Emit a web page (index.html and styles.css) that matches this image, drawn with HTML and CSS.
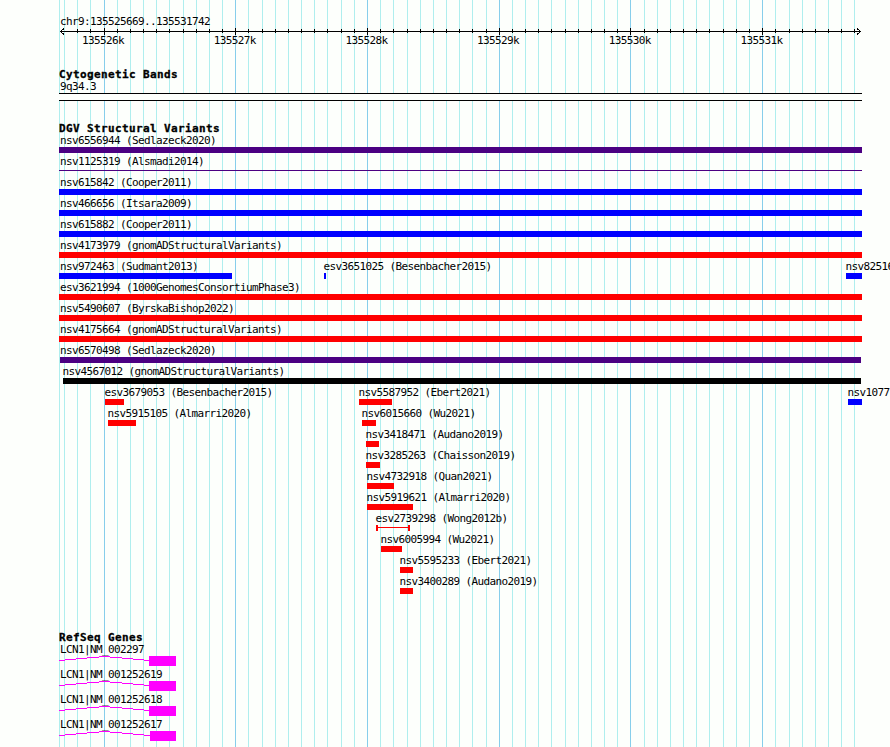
FILE: index.html
```
<!DOCTYPE html>
<html lang="en">
<head>
    <meta charset="UTF-8">
    <title>chr9:135525669..135531742</title>
    <link rel="stylesheet" href="styles.css">
</head>
<body>
    <svg class="grid" width="890" height="747">
        <path id="gridMinor" class="grid-minor"/>
        <path id="gridMajor" class="grid-major"/>
    </svg>

    <div class="browser">
        <!-- Ruler -->
        <div class="region">chr9:135525669..135531742</div>
        <svg class="ruler" width="803" height="5">
            <path d="M1 3.5H802M5 .5L1.500 3.500L5 6.500M798 .5L801.500 3.500L798 6.500"/>
            <path id="ticks"/>
        </svg>
        <div class="ruler-labels">
            <span>135526k</span>
            <span>135527k</span>
            <span>135528k</span>
            <span>135529k</span>
            <span>135530k</span>
            <span>135531k</span>
        </div>

        <!-- Cytogenetic bands -->
        <section class="track track-bands">
            <h2>Cytogenetic Bands</h2>
            <div class="label">9q34.3</div>
            <div class="band"></div>
        </section>

        <!-- Structural variants -->
        <section class="track track-dgv">
            <h2>DGV Structural Variants</h2>
            <div class="row"><div class="feature full purple"><span class="label">nsv6556944 (Sedlazeck2020)</span><i class="bar"></i></div></div>
            <div class="row"><div class="feature full purple"><span class="label">nsv1125319 (Alsmadi2014)</span><i class="bar thin"></i></div></div>
            <div class="row"><div class="feature full blue"><span class="label">nsv615842 (Cooper2011)</span><i class="bar"></i></div></div>
            <div class="row"><div class="feature full blue"><span class="label">nsv466656 (Itsara2009)</span><i class="bar"></i></div></div>
            <div class="row"><div class="feature full blue"><span class="label">nsv615882 (Cooper2011)</span><i class="bar"></i></div></div>
            <div class="row"><div class="feature full red"><span class="label">nsv4173979 (gnomADStructuralVariants)</span><i class="bar"></i></div></div>
            <div class="row">
                <div class="feature edge blue" style="--x:0px;--w:173px"><span class="label">nsv972463 (Sudmant2013)</span><i class="bar"></i></div>
                <div class="feature blue" style="--x:265px;--w:2px"><span class="label">esv3651025 (Besenbacher2015)</span><i class="bar"></i></div>
                <div class="feature blue" style="--x:787px;--w:16px"><span class="label">nsv82516</span><i class="bar"></i></div>
            </div>
            <div class="row"><div class="feature full red"><span class="label">esv3621994 (1000GenomesConsortiumPhase3)</span><i class="bar"></i></div></div>
            <div class="row"><div class="feature full red"><span class="label">nsv5490607 (ByrskaBishop2022)</span><i class="bar"></i></div></div>
            <div class="row"><div class="feature full red"><span class="label">nsv4175664 (gnomADStructuralVariants)</span><i class="bar"></i></div></div>
            <div class="row"><div class="feature near purple" style="--x:1px;--w:801px"><span class="label">nsv6570498 (Sedlazeck2020)</span><i class="bar"></i></div></div>
            <div class="row"><div class="feature black" style="--x:4px;--w:798px"><span class="label">nsv4567012 (gnomADStructuralVariants)</span><i class="bar"></i></div></div>
            <div class="row">
                <div class="feature red" style="--x:46px;--w:19px"><span class="label">esv3679053 (Besenbacher2015)</span><i class="bar"></i></div>
                <div class="feature red" style="--x:300px;--w:33px"><span class="label">nsv5587952 (Ebert2021)</span><i class="bar"></i></div>
                <div class="feature blue" style="--x:789px;--w:14px"><span class="label">nsv1077</span><i class="bar"></i></div>
            </div>
            <div class="row">
                <div class="feature red" style="--x:49px;--w:28px"><span class="label">nsv5915105 (Almarri2020)</span><i class="bar"></i></div>
                <div class="feature red" style="--x:303px;--w:14px"><span class="label">nsv6015660 (Wu2021)</span><i class="bar"></i></div>
            </div>
            <div class="row"><div class="feature red" style="--x:307px;--w:13px"><span class="label">nsv3418471 (Audano2019)</span><i class="bar"></i></div></div>
            <div class="row"><div class="feature red" style="--x:307px;--w:14px"><span class="label">nsv3285263 (Chaisson2019)</span><i class="bar"></i></div></div>
            <div class="row"><div class="feature red" style="--x:308px;--w:27px"><span class="label">nsv4732918 (Quan2021)</span><i class="bar"></i></div></div>
            <div class="row"><div class="feature red" style="--x:308px;--w:46px"><span class="label">nsv5919621 (Almarri2020)</span><i class="bar"></i></div></div>
            <div class="row"><div class="feature red" style="--x:317px;--w:34px"><span class="label">esv2739298 (Wong2012b)</span><i class="bar span"></i></div></div>
            <div class="row"><div class="feature red" style="--x:322px;--w:21px"><span class="label">nsv6005994 (Wu2021)</span><i class="bar"></i></div></div>
            <div class="row"><div class="feature red" style="--x:341px;--w:13px"><span class="label">nsv5595233 (Ebert2021)</span><i class="bar"></i></div></div>
            <div class="row"><div class="feature red" style="--x:341px;--w:13px"><span class="label">nsv3400289 (Audano2019)</span><i class="bar"></i></div></div>
        </section>

        <!-- Genes -->
        <section class="track track-genes">
            <h2>RefSeq Genes</h2>
            <div class="gene">
                <div class="label">LCN1|NM_002297</div>
                <svg width="117" height="10"><path d="M0 4.500L45.500 .5L91 4.500"/><rect x="90" width="27" height="10"/></svg>
            </div>
            <div class="gene">
                <div class="label">LCN1|NM_001252619</div>
                <svg width="117" height="10"><path d="M0 4.500L45.500 .5L91 4.500"/><rect x="90" width="27" height="10"/></svg>
            </div>
            <div class="gene">
                <div class="label">LCN1|NM_001252618</div>
                <svg width="117" height="10"><path d="M0 4.500L45.500 .5L91 4.500"/><rect x="90" width="27" height="10"/></svg>
            </div>
            <div class="gene">
                <div class="label">LCN1|NM_001252617</div>
                <svg width="117" height="10"><path d="M0 4.500L45.500 .5L91 4.500"/><rect x="91" width="26" height="10"/></svg>
            </div>
        </section>
    </div>

    <script>
        // one line per 100 bp, a darker one per 1000 bp
        const left = 59, first = 64.55, step = 13.172;
        let minor = 'M' + (left + 0.5) + ' 0V747';
        let major = '';
        let ticks = '';

        for (let i = 0; i <= 60; i++) {
            const x = Math.floor(first + i * step) + 0.5;
            const isMajor = i % 10 === 3;
            if (isMajor) {
                major += 'M' + x + ' 0V747';
            } else {
                minor += 'M' + x + ' 0V747';
            }
            // no tick beside the left arrow head
            if (i > 0) {
                ticks += 'M' + (x - left) + (isMajor ? ' 0V7' : ' 1V5');
            }
        }

        document.getElementById('gridMinor').setAttribute('d', minor);
        document.getElementById('gridMajor').setAttribute('d', major);
        document.getElementById('ticks').setAttribute('d', ticks);
    </script>
</body>
</html>
```
FILE: styles.css
```
body {
    margin: 0;
    height: 747px;
    overflow: hidden;
    position: relative;
    background: #fdfffc;
    color: #000;
    font: 11px/16px "DejaVu Sans Mono", monospace;
    letter-spacing: -0.622px;
    white-space: nowrap;
}

svg {
    display: block;
    fill: none;
    shape-rendering: crispEdges;
}

/* lies behind all the tracks */
.grid {
    position: absolute;
    top: 0;
    left: 0;
}

.grid-minor {
    stroke: #afeeee;
}

.grid-major {
    stroke: #87ceeb;
}

.browser {
    position: relative;
    box-sizing: border-box;
    width: 831px;
    height: 747px;
    margin-left: 59px;
    padding-top: 14px;
    overflow: hidden;
}

.region,
.label {
    height: 14px;
    padding-left: 1px;
}

.ruler {
    overflow: visible;
    stroke: #000;
}

.ruler-labels {
    display: flex;
    height: 14px;
    padding-left: 23px;
}

.ruler-labels span {
    flex: 0 0 131.7px;
}

.track h2 {
    height: 12px;
    margin: 0;
    font-size: 11px;
    line-height: 16px;
    letter-spacing: 0.378px;
    -webkit-text-stroke: 0.3px #000;
}

.track-bands {
    margin-top: 20px;
}

.track-dgv {
    margin-top: 20px;
}

.track-genes {
    margin-top: 35px;
}

.band {
    width: 803px;
    height: 6px;
    border-top: 1px solid #000;
    border-bottom: 1px solid #000;
    background: #fdfffc;
}

.row {
    display: grid;
    height: 21px;
}

/* features of one row share the cell, each pushed to its own start */
.feature {
    grid-area: 1 / 1;
    width: var(--w);
    margin-left: var(--x);
}

.feature .label {
    display: block;
    padding: 0;
    margin-left: -0.5px;
}

.feature.full {
    width: 803px;
}

.feature.full .label,
.feature.edge .label {
    margin-left: 1px;
}

.feature.near .label {
    margin-left: 0;
}

.bar {
    display: block;
    height: 6px;
    background: var(--color);
}

.bar.thin {
    height: 1px;
    margin-top: 2px;
}

.bar.span {
    box-sizing: border-box;
    border: solid var(--color);
    border-width: 0 2px;
    background: linear-gradient(var(--color), var(--color)) 0 2px / 100% 1px no-repeat;
}

.purple { --color: #4b0082; }
.blue { --color: #0000ff; }
.red { --color: #ff0000; }
.black { --color: #000; }

.gene {
    height: 25px;
}

/* keeps the underscore above the intron line */
.gene .label {
    position: relative;
    z-index: 1;
}

.gene path {
    stroke: #ff00ff;
}

.gene rect {
    fill: #ff00ff;
}
```
